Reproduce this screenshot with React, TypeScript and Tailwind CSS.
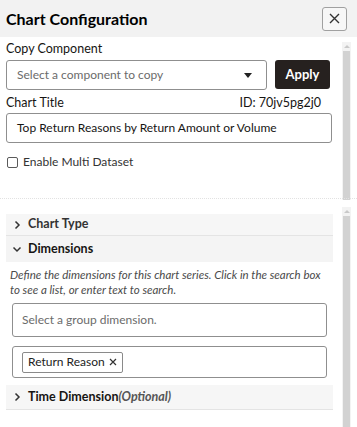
import React from "react";

const font = { fontFamily: 'Lato, "Noto Sans", sans-serif' };

function Chevron({ open }: { open?: boolean }) {
  return (
    <svg width="10" height="10" viewBox="0 0 10 10" className="shrink-0">
      {open ? (
        <path d="M1.5 3.5 L5 7 L8.5 3.5" fill="none" stroke="#333" strokeWidth="1.5" />
      ) : (
        <path d="M3.5 1.5 L7 5 L3.5 8.5" fill="none" stroke="#333" strokeWidth="1.5" />
      )}
    </svg>
  );
}

function Scrollbar({ className }: { className: string }) {
  return (
    <div className={"absolute w-[9px] bg-[#f3f3f3] " + className}>
      <div className="h-[8px] flex items-center justify-center">
        <div className="w-0 h-0 border-l-[3px] border-r-[3px] border-b-[3px] border-l-transparent border-r-transparent border-b-[#c9c9c9]" />
      </div>
      <div className="absolute left-[1px] right-[1px] top-[9px] bottom-0 bg-[#d2d2d2]" />
    </div>
  );
}

export default function App() {
  return (
    <div className="relative w-[357px] h-[427px] bg-white overflow-hidden text-[#161513]" style={font}>
      {/* header */}
      <div className="h-[37px] bg-[#f2f2f2] flex items-center justify-between pl-[6px] pr-[10px]">
        <div className="text-[16px] font-bold text-black leading-none">Chart Configuration</div>
        <button className="w-[25px] h-[24px] border border-[#a0a0a0] rounded-[3px] bg-white/40 flex items-center justify-center">
          <svg width="11" height="11" viewBox="0 0 11 11">
            <path d="M1 1 L10 10 M10 1 L1 10" stroke="#333" strokeWidth="1.4" />
          </svg>
        </button>
      </div>

      {/* top section */}
      <div className="relative h-[161px]">
        <Scrollbar className="left-[342px] top-[5px] bottom-[-2px]" />
        <div className="pl-[6px] pr-[25px] pt-[3px]">
          <div className="text-[12.5px] leading-[17px] text-[#161513]">Copy Component</div>
          <div className="flex gap-[8px] mt-[3px]">
            <div className="w-[261px] h-[30px] border border-[#8f8f8f] rounded-[3px] flex items-center justify-between pl-[10px] pr-[14px]">
              <span className="text-[12px] text-[#6b6b6b]">Select a component to copy</span>
              <span className="w-0 h-0 border-l-[4px] border-r-[4px] border-t-[5px] border-l-transparent border-r-transparent border-t-[#222]" />
            </div>
            <button className="w-[55px] h-[29px] bg-[#26211f] rounded-[3px] text-white text-[13px] font-bold">Apply</button>
          </div>
          <div className="flex justify-between mt-[4px] pr-[11px] text-[12.5px] leading-[17px]">
            <span>Chart Title</span>
            <span>ID: 70jv5pg2j0</span>
          </div>
          <div className="mt-[2px] w-[326px] h-[30px] border border-[#8f8f8f] rounded-[3px] flex items-center pl-[10px] text-[12px]">
            Top Return Reasons by Return Amount or Volume
          </div>
          <div className="flex items-center gap-[5px] mt-[12px]">
            <span className="w-[11px] h-[11px] border border-[#5a5a5a] rounded-[2px] ml-[1px]" />
            <span className="text-[12px] leading-[14px] text-[#333]">Enable Multi Dataset</span>
          </div>
        </div>
      </div>

      {/* bottom section */}
      <div className="relative border-t border-dotted border-[#e2e2e2] h-[229px]">
        <Scrollbar className="left-[342px] top-[8px] bottom-[-40px]" />
        <div className="pl-[6px] pt-[15px] w-[333px]">
          <div className="h-[22px] bg-[#f6f6f6] border-b border-[#e4e4e4] flex items-center gap-[6px] pl-[6px] text-[12.5px] font-bold text-[#333]">
            <Chevron />
            <span>Chart Type</span>
          </div>
          <div className="h-[26px] bg-[#f4f4f4] flex items-center gap-[6px] pl-[6px] text-[12.5px] font-bold text-[#161513]">
            <Chevron open />
            <span>Dimensions</span>
          </div>
          <div className="pl-[4px] pr-[2px] pt-[5px] text-[11.5px] italic leading-[15px] text-[#4a4a4a]">
            Define the dimensions for this chart series. Click in the search box to see a list, or enter text to search.
          </div>
          <div className="ml-[6px] mt-[6px] w-[315px] h-[34px] border border-[#8f8f8f] rounded-[3px] flex items-center pl-[9px] text-[12px] text-[#6b6b6b]">
            Select a group dimension.
          </div>
          <div className="ml-[6px] mt-[9px] w-[315px] h-[32px] border border-[#8f8f8f] rounded-[3px] flex items-center pl-[9px]">
            <span className="h-[21px] border border-[#8a8a8a] rounded-[2px] flex items-center gap-[4px] px-[5px] text-[12px] text-[#222]">
              Return Reason
              <svg width="8" height="8" viewBox="0 0 8 8">
                <path d="M1 1 L7 7 M7 1 L1 7" stroke="#333" strokeWidth="1.2" />
              </svg>
            </span>
          </div>
          <div className="mt-[7px] h-[25px] bg-[#f6f6f6] border-b border-[#e4e4e4] flex items-center gap-[6px] pl-[6px] text-[12.5px] font-bold text-[#161513]">
            <Chevron />
            <span>
              Time Dimension<span className="italic font-bold text-[#555]">(Optional)</span>
            </span>
          </div>
        </div>
      </div>
    </div>
  );
}
